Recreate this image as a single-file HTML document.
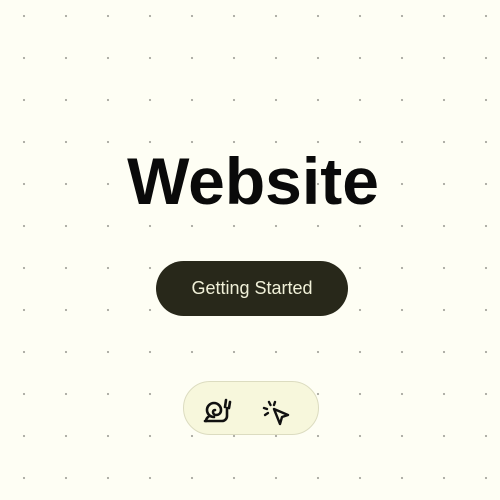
<!DOCTYPE html>
<html><head><style>
html,body{margin:0;width:500px;height:500px;overflow:hidden}
body{background-color:#fefef4;background-image:radial-gradient(circle,#a8a8a0 0.9px,transparent 1.3px);background-size:42px 42px;background-position:3px -5px;position:relative;font-family:"Liberation Sans",sans-serif}
h1{position:absolute;left:3px;width:500px;top:146px;margin:0;text-align:center;font-size:66px;font-weight:bold;color:#0a0a0a;letter-spacing:0;line-height:70px}
.btn{position:absolute;left:156px;top:261px;width:192px;height:55px;border-radius:28px;background:#28281a;color:#f0f0d8;font-size:18px;text-align:center;line-height:55px}
.pill{position:absolute;left:183px;top:381px;width:136px;height:54px;border-radius:28px;background:#f7f7dc;border:1px solid #dcdcc0;box-sizing:border-box}
svg{position:absolute}
</style></head><body>
<h1>Website</h1>
<div class="btn">Getting Started</div>
<div class="pill">
<svg style="left:18px;top:14px" width="30" height="28" viewBox="0 0 30 28" fill="none" stroke="#111" stroke-width="2.6" stroke-linecap="round" stroke-linejoin="round">
<path d="M3 25h17a5 5 0 0 0 5-5V12"/><path d="M23 11l1-7M27 12l1-6"/>
<path d="M4 25c0-3 3-5 4-5"/><path d="M12 21a7 7 0 1 1 7-7c0 3-2 5-5 5a3 3 0 0 1-3-3 2 2 0 0 1 2-2"/>
</svg>
<svg style="left:78px;top:17px" width="30" height="28" viewBox="0 0 30 28" fill="none" stroke="#111" stroke-width="2.4" stroke-linecap="round" stroke-linejoin="round">
<path d="M12 10l14 6-6 2-2 7z"/><path d="M7 3l1.5 3M2 9l3 1M13 3l-1 3M3 16l3-2"/>
</svg>
</div>
</body></html>
